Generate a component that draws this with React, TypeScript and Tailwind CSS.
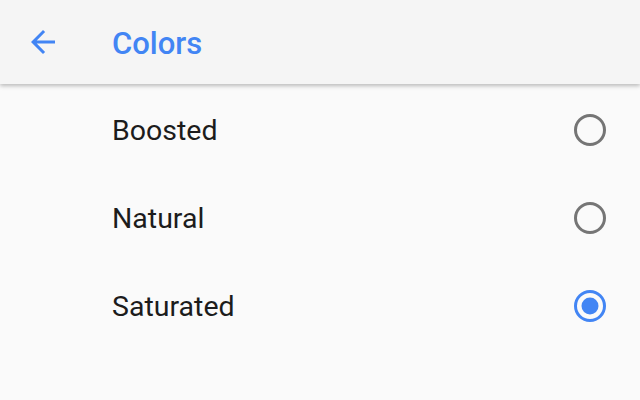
import { useState } from "react";

const OPTIONS = ["Boosted", "Natural", "Saturated"];

function Radio({ checked }: { checked: boolean }) {
  return (
    <svg width="32" height="32" viewBox="0 0 32 32">
      <circle cx="16" cy="16" r="14.5" fill="none" stroke={checked ? "#4285f4" : "#757575"} strokeWidth="3" />
      {checked && <circle cx="16" cy="16" r="8.5" fill="#4285f4" />}
    </svg>
  );
}

export default function App() {
  const [selected, setSelected] = useState("Saturated");

  return (
    <div className="w-[640px] h-[400px] overflow-hidden flex flex-col bg-[#fafafa]" style={{ fontFamily: "Roboto, sans-serif" }}>
      {/* Toolbar */}
      <header className="relative z-10 h-[84px] shrink-0 flex items-center bg-[#f5f5f5] shadow-[0_2px_4px_rgba(0,0,0,0.25)]">
        <button className="w-[36px] h-[36px] ml-[25px] flex items-center justify-center">
          <svg width="36" height="36" viewBox="0 0 24 24" fill="#4285f4">
            <path d="M20 11H7.83l5.59-5.59L12 4l-8 8 8 8 1.41-1.41L7.83 13H20v-2z" />
          </svg>
        </button>
        <h1 className="ml-[51px] pt-[3px] text-[31px] font-medium text-[#4285f4] leading-none">Colors</h1>
      </header>

      {/* Options */}
      <div className="flex flex-col pt-[2px]">
        {OPTIONS.map(o => (
          <button key={o} onClick={() => setSelected(o)}
            className="h-[88px] flex items-center justify-between pl-[112px] pr-[34px] text-left">
            <span className="pt-[3px] text-[28.5px] text-[#1c1c1c] leading-none">{o}</span>
            <Radio checked={selected === o} />
          </button>
        ))}
      </div>
    </div>
  );
}
